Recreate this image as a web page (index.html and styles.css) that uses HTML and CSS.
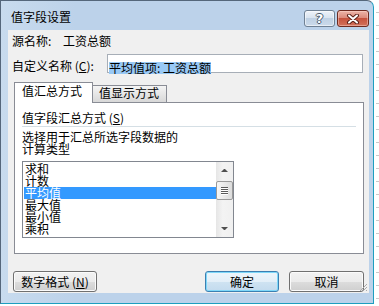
FILE: index.html
```html
<!DOCTYPE html>
<html lang="zh-CN">

<head>
    <meta charset="utf-8" />
    <title>值字段设置</title>
    <link rel="stylesheet" href="styles.css">
</head>

<body>
    <div class="window">
        <div class="titlebar">
            <span class="title">值字段设置</span>
            <div class="caption-btns">
                <button class="cap help">?</button>
                <button class="cap close">
                    <svg width="14" height="10" viewBox="0 0 14 10">
                        <path d="M3 1.5 L11 8.5 M11 1.5 L3 8.5" stroke="#5a2018" stroke-width="4" stroke-linecap="round" fill="none" />
                        <path d="M3 1.5 L11 8.5 M11 1.5 L3 8.5" stroke="#fff" stroke-width="2" stroke-linecap="round" fill="none" />
                    </svg>
                </button>
            </div>
        </div>

        <div class="client">
            <div class="source">
                <span class="source-label">源名称:</span>
                <span>工资总额</span>
            </div>

            <div class="custom">
                <span class="custom-label">自定义名称 (<u>C</u>):</span>
                <div class="textbox"><span class="sel">平均值项: 工资总额</span></div>
            </div>

            <div class="tabs">
                <div class="tab active">值汇总方式</div>
                <div class="tab second">值显示方式</div>
            </div>

            <div class="panel">
                <div class="group-title">值字段汇总方式 (<u>S</u>)</div>
                <div class="sep"></div>
                <div class="desc">选择用于汇总所选字段数据的<br>计算类型</div>

                <div class="listbox">
                    <ul class="items">
                        <li>求和</li>
                        <li>计数</li>
                        <li class="selected">平均值</li>
                        <li>最大值</li>
                        <li>最小值</li>
                        <li>乘积</li>
                    </ul>
                    <div class="vscroll">
                        <div class="arrow-box"><span class="arrow up"></span></div>
                        <div class="thumb"><i></i><i></i><i></i><i></i></div>
                        <div class="track"></div>
                        <div class="arrow-box"><span class="arrow down"></span></div>
                    </div>
                </div>
            </div>

            <div class="buttons">
                <button class="btn fmt">数字格式 (<u>N</u>)</button>
                <button class="btn ok">确定</button>
                <button class="btn cancel">取消</button>
            </div>

            <svg class="grip" width="10" height="10" viewBox="0 0 10 10">
                <path d="M9 2 L2 9 M9 5 L5 9 M9 8 L8 9" stroke="#a9a9a9" stroke-width="1" fill="none" />
            </svg>
        </div>
    </div>
</body>

</html>
```

FILE: styles.css
```css
body {
    margin: 0;
    width: 379px;
    height: 306px;
    overflow: hidden;
    font-family: "Noto Sans CJK SC", sans-serif;
    font-size: 12px;
    color: #000;
    background: #fff linear-gradient(to bottom, transparent 12px, #c9c9c9 12px) right top / 3px 13px repeat-y;
}

.window {
    width: 374px;
    height: 304px;
    box-sizing: border-box;
    display: flex;
    flex-direction: column;
    background: linear-gradient(to right, #c8dbee, #bcd2ea 20%, #bcd2ea);
    border-left: 1px solid #55677b;
    border-top: 1px solid #55677b;
    border-right: 1px solid #1d9ec0;
    border-bottom: 1px solid #1d9ec0;
    border-top-right-radius: 7px;
}

/* title bar */

.titlebar {
    height: 29px;
    display: flex;
    flex-shrink: 0;
}

.title {
    margin: 9px 0 0 10px;
    line-height: 14px;
}

.caption-btns {
    display: flex;
    gap: 2px;
    height: 17px;
    margin: 9px 4px 0 auto;
}

.cap {
    box-sizing: border-box;
    height: 17px;
    padding: 0;
    border-radius: 3px;
    display: flex;
    align-items: center;
    justify-content: center;
}

.help {
    width: 31px;
    border: 1px solid #6f8194;
    background: linear-gradient(#eef3f9, #d9e4f0 45%, #bfd1e4 50%, #cbdaea);
    box-shadow: inset 0 0 0 1px rgba(255, 255, 255, 0.55);
    color: #fff;
    font: bold 13px "DejaVu Sans", sans-serif;
    line-height: 15px;
    text-shadow: 1px 0 0 #4b5b6e, -1px 0 0 #4b5b6e, 0 1px 0 #4b5b6e, 0 -1px 0 #4b5b6e;
}

.close {
    width: 32px;
    border: 1px solid #6d2b21;
    background: linear-gradient(#ecb5a9, #dc8b7c 45%, #c6533e 50%, #d2715b);
    box-shadow: inset 0 0 0 1px rgba(255, 220, 210, 0.45);
}

/* client area */

.client {
    position: relative;
    display: flex;
    flex-direction: column;
    height: 263px;
    margin: 0 4px 0 7px;
    background: #f0f0f0;
}

.source {
    display: flex;
    margin-top: 4px;
    padding-left: 4px;
    line-height: 14px;
}

.source-label {
    width: 51px;
}

.custom {
    display: flex;
    align-items: flex-start;
    height: 19px;
    margin-top: 6px;
    padding-left: 4px;
}

.custom-label {
    width: 95px;
    margin-top: 5px;
    line-height: 14px;
}

.textbox {
    width: 256px;
    height: 19px;
    box-sizing: border-box;
    border: 1px solid #a7aeb7;
    background: #fff;
    padding: 4px 0 0 1px;
}

.sel {
    display: inline-block;
    line-height: 12px;
    background: #99c9f5;
}

/* tabs */

.tabs {
    display: flex;
    align-items: flex-end;
    height: 20px;
    margin: 9px 0 0 6px;
}

.tab {
    box-sizing: border-box;
    border: 1px solid #898c95;
    border-bottom: none;
    line-height: 14px;
}

.tab.active {
    position: relative;
    z-index: 1;
    width: 79px;
    height: 21px;
    margin-bottom: -1px;
    padding: 1px 0 0 7px;
    background: #fff;
}

.tab.second {
    width: 75px;
    height: 17px;
    margin-left: -1px;
    padding: 0 0 0 6px;
    background: linear-gradient(#f4f4f4, #e6e6e6 50%, #d8d8d8);
}

.panel {
    height: 152px;
    box-sizing: border-box;
    margin: 0 5px 0 6px;
    padding: 8px 7px 0 7px;
    border: 1px solid #898c95;
    background: #fff;
}

.group-title {
    line-height: 14px;
}

.sep {
    height: 1px;
    margin-top: 1px;
    background: #d5dfe5;
}

.desc {
    margin-top: 4px;
    line-height: 12px;
}

/* list box */

.listbox {
    display: flex;
    width: 212px;
    height: 77px;
    box-sizing: border-box;
    margin-top: 6px;
    border: 1px solid #828790;
}

.items {
    width: 193px;
    margin: 0;
    padding: 1px 0 0 1px;
    box-sizing: border-box;
    list-style: none;
    overflow: hidden;
}

.items li {
    height: 12px;
    line-height: 12px;
    padding-left: 1px;
}

.items li.selected {
    background: #3399ff;
    color: #fff;
}

.vscroll {
    width: 17px;
    display: flex;
    flex-direction: column;
    background: linear-gradient(to right, #e6e6e6, #f3f3f3 40%, #f0f0f0);
}

.arrow-box {
    height: 17px;
    display: flex;
    align-items: center;
    justify-content: center;
}

.arrow {
    width: 1px;
    height: 0;
    border-left: 3px solid transparent;
    border-right: 3px solid transparent;
}

.arrow.up {
    border-bottom: 3px solid #505050;
}

.arrow.down {
    border-top: 3px solid #505050;
}

.thumb {
    height: 19px;
    box-sizing: border-box;
    margin-top: 2px;
    border: 1px solid #9a9a9a;
    border-radius: 2px;
    background: linear-gradient(to right, #f7f7f7, #e9e9e9 50%, #dcdcdc);
    display: flex;
    flex-direction: column;
    align-items: center;
    justify-content: center;
    gap: 1px;
}

.thumb i {
    width: 7px;
    height: 1px;
    background: #5a5a5a;
    box-shadow: 0 1px 0 #fff;
}

.track {
    flex: 1;
}

/* buttons */

.buttons {
    display: flex;
    height: 21px;
    margin-top: 17px;
    padding-left: 5px;
}

.btn {
    box-sizing: border-box;
    height: 21px;
    padding: 0;
    border: 1px solid #707070;
    border-radius: 3px;
    background: linear-gradient(#f2f2f2, #ebebeb 50%, #dddddd 51%, #cfcfcf);
    box-shadow: inset 0 0 0 1px #fbfbfb;
    font: inherit;
    line-height: 14px;
    color: #000;
}

.fmt {
    width: 84px;
}

.ok {
    width: 74px;
    margin-left: 108px;
    border-color: #3c7fb1;
    box-shadow: inset 0 0 0 1px #7fd8f9;
    background: linear-gradient(#eef6fb, #e3eff8 50%, #cfe3f2 51%, #c3dbee);
}

.cancel {
    width: 75px;
    margin-left: 10px;
}

.grip {
    position: absolute;
    right: 1px;
    bottom: 1px;
}
```
